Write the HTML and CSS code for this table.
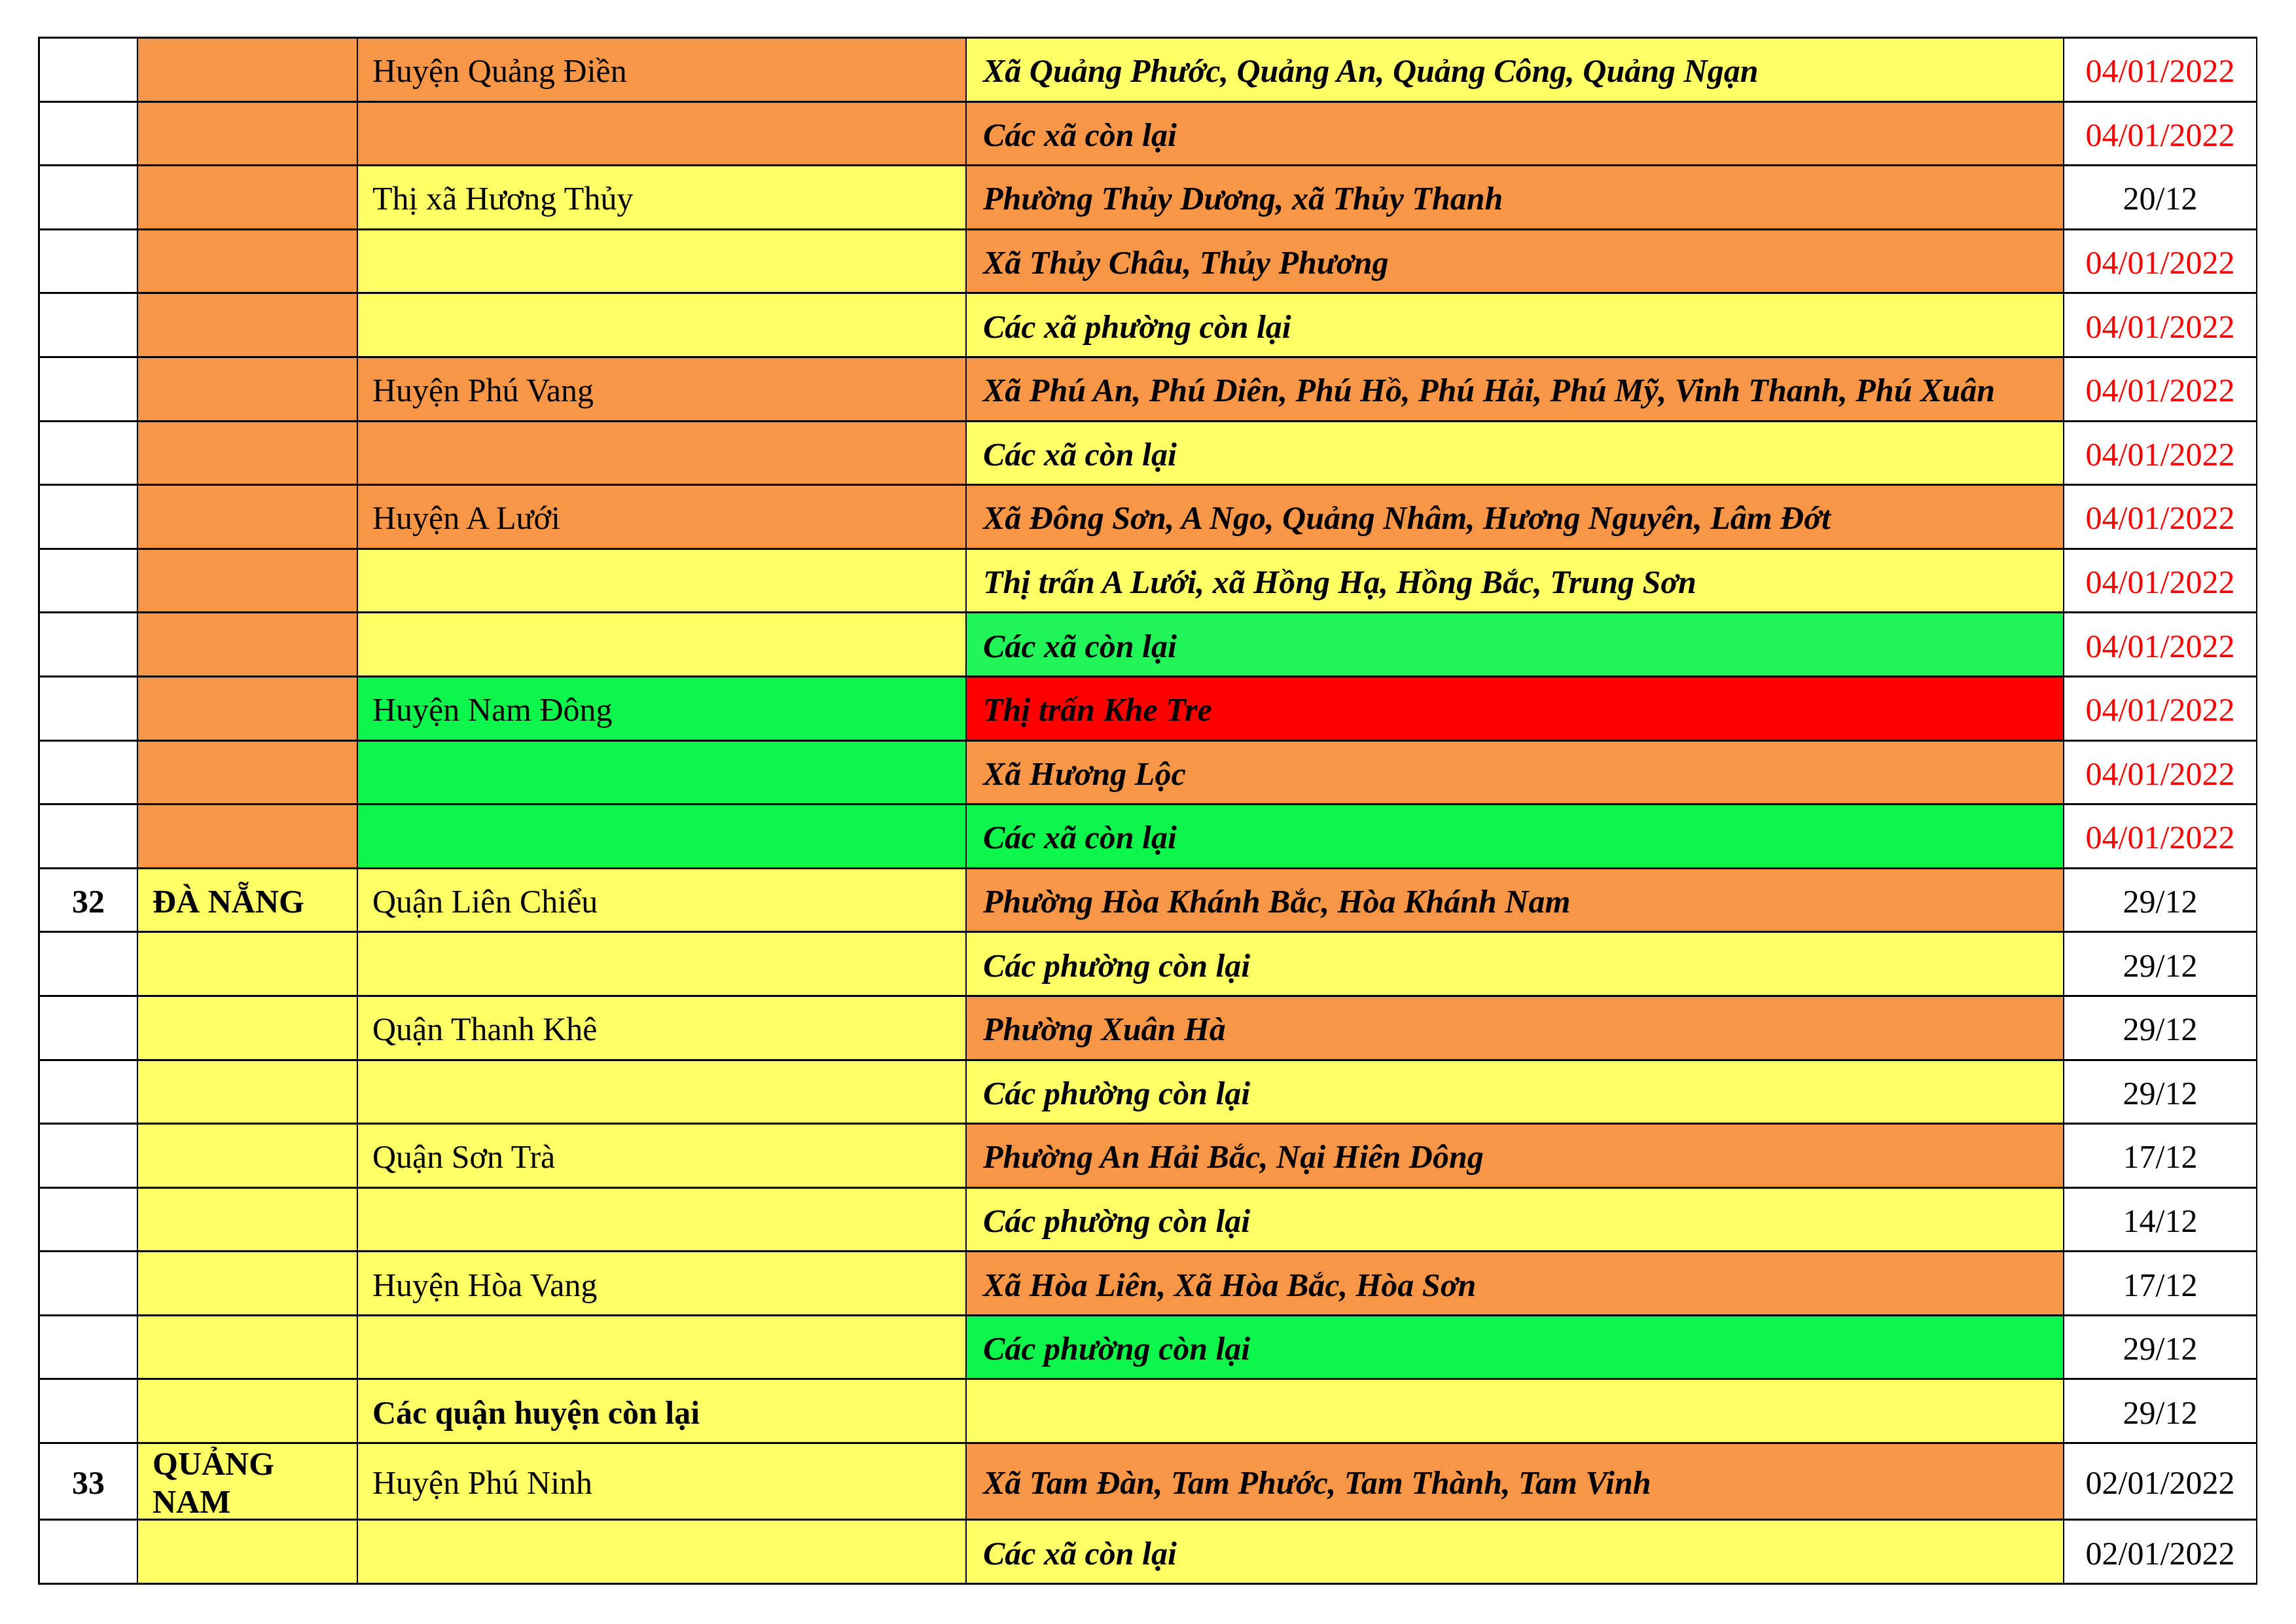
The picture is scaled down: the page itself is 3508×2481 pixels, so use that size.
FILE: index.html
```html
<!DOCTYPE html>
<html lang="vi">
<head>
<meta charset="utf-8">
<title>Bảng cấp độ dịch</title>
<link rel="stylesheet" href="styles.css">
</head>
<body>
<div class="sheet">
  <!-- 1 -->
  <div class="cell white"></div>
  <div class="cell orange"></div>
  <div class="cell orange dist">Huyện Quảng Điền</div>
  <div class="cell yellow ward">Xã Quảng Phước, Quảng An, Quảng Công, Quảng Ngạn</div>
  <div class="cell white date red">04/01/2022</div>
  <!-- 2 -->
  <div class="cell white"></div>
  <div class="cell orange"></div>
  <div class="cell orange"></div>
  <div class="cell orange ward">Các xã còn lại</div>
  <div class="cell white date red">04/01/2022</div>
  <!-- 3 -->
  <div class="cell white"></div>
  <div class="cell orange"></div>
  <div class="cell yellow dist">Thị xã Hương Thủy</div>
  <div class="cell orange ward">Phường Thủy Dương, xã Thủy Thanh</div>
  <div class="cell white date">20/12</div>
  <!-- 4 -->
  <div class="cell white"></div>
  <div class="cell orange"></div>
  <div class="cell yellow"></div>
  <div class="cell orange ward">Xã Thủy Châu, Thủy Phương</div>
  <div class="cell white date red">04/01/2022</div>
  <!-- 5 -->
  <div class="cell white"></div>
  <div class="cell orange"></div>
  <div class="cell yellow"></div>
  <div class="cell yellow ward">Các xã phường còn lại</div>
  <div class="cell white date red">04/01/2022</div>
  <!-- 6 -->
  <div class="cell white"></div>
  <div class="cell orange"></div>
  <div class="cell orange dist">Huyện Phú Vang</div>
  <div class="cell orange ward">Xã Phú An, Phú Diên, Phú Hồ, Phú Hải, Phú Mỹ, Vinh Thanh, Phú Xuân</div>
  <div class="cell white date red">04/01/2022</div>
  <!-- 7 -->
  <div class="cell white"></div>
  <div class="cell orange"></div>
  <div class="cell orange"></div>
  <div class="cell yellow ward">Các xã còn lại</div>
  <div class="cell white date red">04/01/2022</div>
  <!-- 8 -->
  <div class="cell white"></div>
  <div class="cell orange"></div>
  <div class="cell orange dist">Huyện A Lưới</div>
  <div class="cell orange ward">Xã Đông Sơn, A Ngo, Quảng Nhâm, Hương Nguyên, Lâm Đớt</div>
  <div class="cell white date red">04/01/2022</div>
  <!-- 9 -->
  <div class="cell white"></div>
  <div class="cell orange"></div>
  <div class="cell yellow"></div>
  <div class="cell yellow ward">Thị trấn A Lưới, xã Hồng Hạ, Hồng Bắc, Trung Sơn</div>
  <div class="cell white date red">04/01/2022</div>
  <!-- 10 -->
  <div class="cell white"></div>
  <div class="cell orange"></div>
  <div class="cell yellow"></div>
  <div class="cell green-light ward">Các xã còn lại</div>
  <div class="cell white date red">04/01/2022</div>
  <!-- 11 -->
  <div class="cell white"></div>
  <div class="cell orange"></div>
  <div class="cell green dist">Huyện Nam Đông</div>
  <div class="cell redfill ward">Thị trấn Khe Tre</div>
  <div class="cell white date red">04/01/2022</div>
  <!-- 12 -->
  <div class="cell white"></div>
  <div class="cell orange"></div>
  <div class="cell green"></div>
  <div class="cell orange ward">Xã Hương Lộc</div>
  <div class="cell white date red">04/01/2022</div>
  <!-- 13 -->
  <div class="cell white"></div>
  <div class="cell orange"></div>
  <div class="cell green"></div>
  <div class="cell green ward">Các xã còn lại</div>
  <div class="cell white date red">04/01/2022</div>
  <!-- 14 -->
  <div class="cell white num">32</div>
  <div class="cell yellow prov">ĐÀ NẴNG</div>
  <div class="cell yellow dist">Quận Liên Chiểu</div>
  <div class="cell orange ward">Phường Hòa Khánh Bắc, Hòa Khánh Nam</div>
  <div class="cell white date">29/12</div>
  <!-- 15 -->
  <div class="cell white"></div>
  <div class="cell yellow"></div>
  <div class="cell yellow"></div>
  <div class="cell yellow ward">Các phường còn lại</div>
  <div class="cell white date">29/12</div>
  <!-- 16 -->
  <div class="cell white"></div>
  <div class="cell yellow"></div>
  <div class="cell yellow dist">Quận Thanh Khê</div>
  <div class="cell orange ward">Phường Xuân Hà</div>
  <div class="cell white date">29/12</div>
  <!-- 17 -->
  <div class="cell white"></div>
  <div class="cell yellow"></div>
  <div class="cell yellow"></div>
  <div class="cell yellow ward">Các phường còn lại</div>
  <div class="cell white date">29/12</div>
  <!-- 18 -->
  <div class="cell white"></div>
  <div class="cell yellow"></div>
  <div class="cell yellow dist">Quận Sơn Trà</div>
  <div class="cell orange ward">Phường An Hải Bắc, Nại Hiên Dông</div>
  <div class="cell white date">17/12</div>
  <!-- 19 -->
  <div class="cell white"></div>
  <div class="cell yellow"></div>
  <div class="cell yellow"></div>
  <div class="cell yellow ward">Các phường còn lại</div>
  <div class="cell white date">14/12</div>
  <!-- 20 -->
  <div class="cell white"></div>
  <div class="cell yellow"></div>
  <div class="cell yellow dist">Huyện Hòa Vang</div>
  <div class="cell orange ward">Xã Hòa Liên, Xã Hòa Bắc, Hòa Sơn</div>
  <div class="cell white date">17/12</div>
  <!-- 21 -->
  <div class="cell white"></div>
  <div class="cell yellow"></div>
  <div class="cell yellow"></div>
  <div class="cell green ward">Các phường còn lại</div>
  <div class="cell white date">29/12</div>
  <!-- 22 -->
  <div class="cell white"></div>
  <div class="cell yellow"></div>
  <div class="cell yellow prov">Các quận huyện còn lại</div>
  <div class="cell yellow"></div>
  <div class="cell white date">29/12</div>
  <!-- 23 -->
  <div class="cell white num">33</div>
  <div class="cell yellow prov">QUẢNG NAM</div>
  <div class="cell yellow dist">Huyện Phú Ninh</div>
  <div class="cell orange ward">Xã Tam Đàn, Tam Phước, Tam Thành, Tam Vinh</div>
  <div class="cell white date">02/01/2022</div>
  <!-- 24 -->
  <div class="cell white"></div>
  <div class="cell yellow"></div>
  <div class="cell yellow"></div>
  <div class="cell yellow ward">Các xã còn lại</div>
  <div class="cell white date">02/01/2022</div>
</div>
</body>
</html>
```
FILE: styles.css
```css
html, body {
  margin: 0;
  padding: 0;
  background: #ffffff;
}

body {
  font-family: "Liberation Serif", "Times New Roman", serif;
  font-size: 50px;
  color: #000000;
}

.sheet {
  margin: 56px 0 0 58px;
  width: 3391px;
  box-sizing: border-box;
  display: grid;
  grid-template-columns: 150px 336px 930px 1677px 295px;
  grid-template-rows: repeat(22, 97.6px) 117px 98px;
  border-top: 3px solid #000;
  border-left: 3px solid #000;
}

.cell {
  box-sizing: border-box;
  border-right: 2px solid #000;
  border-bottom: 3px solid #000;
  display: flex;
  align-items: center;
  padding: 4px 20px 0 22px;
  line-height: normal;
}

.white { background: #ffffff; }
.orange { background: #f79646; }
.yellow { background: #ffff66; }
.green { background: #0cf64c; }
.green-light { background: #21f55a; }
.redfill { background: #ff0000; }

.dist { font-weight: normal; }
.prov { font-weight: bold; }
.ward {
  font-weight: bold;
  font-style: italic;
  padding-left: 25px;
  white-space: nowrap;
}

.num {
  font-weight: bold;
  justify-content: center;
  padding: 4px 0 0 0;
}

.date {
  justify-content: center;
  padding: 4px 0 0 0;
}

.date.red { color: #ff0000; }
```
